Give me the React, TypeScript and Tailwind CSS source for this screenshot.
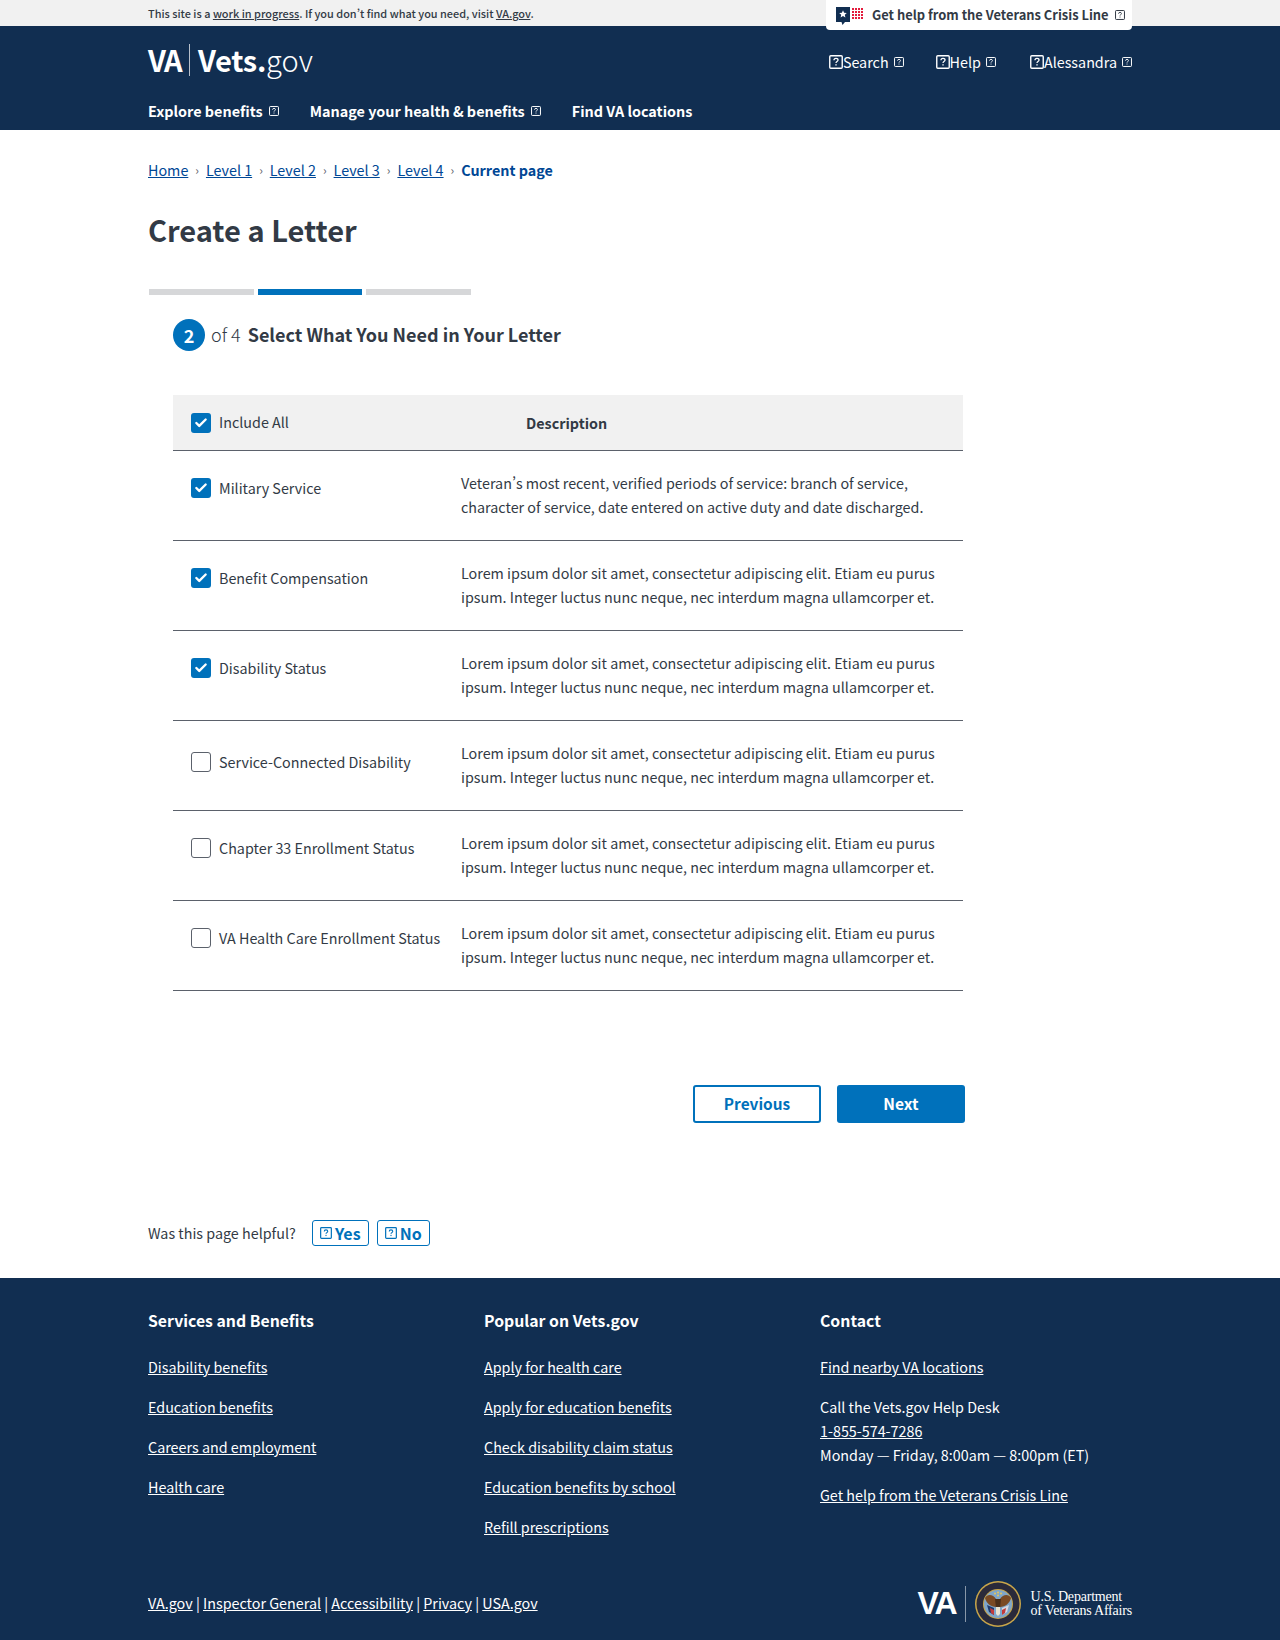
import React from 'react';
import { Check } from 'lucide-react';

const FONT = "font-['Noto_Sans_CJK_SC','Noto_Sans',sans-serif]";

const lorem =
  'Lorem ipsum dolor sit amet, consectetur adipiscing elit. Etiam eu purus ipsum. Integer luctus nunc neque, nec interdum magna ullamcorper et.';

const rows = [
  {
    label: 'Military Service',
    checked: true,
    rowClass: 'pt-[27px]',
    text: 'Veteran’s most recent, verified periods of service: branch of service, character of service, date entered on active duty and date discharged.',
  },
  { label: 'Benefit Compensation', checked: true, rowClass: 'pt-[27px]', text: lorem },
  { label: 'Disability Status', checked: true, rowClass: 'pt-[27px]', text: lorem },
  { label: 'Service-Connected Disability', checked: false, rowClass: 'pt-[31px]', text: lorem },
  { label: 'Chapter 33 Enrollment Status', checked: false, rowClass: 'pt-[27px]', text: lorem },
  { label: 'VA Health Care Enrollment Status', checked: false, rowClass: 'pt-[27px]', text: lorem },
];

const footerCols = [
  {
    title: 'Services and Benefits',
    links: ['Disability benefits', 'Education benefits', 'Careers and employment', 'Health care'],
  },
  {
    title: 'Popular on Vets.gov',
    links: [
      'Apply for health care',
      'Apply for education benefits',
      'Check disability claim status',
      'Education benefits by school',
      'Refill prescriptions',
    ],
  },
];

// missing-glyph box that the icon font leaves behind in the original
const Tofu: React.FC<{ size?: number; className?: string }> = ({ size = 11, className = '' }) => (
  <svg width={size} height={size} viewBox="0 0 11 11" className={`shrink-0 ${className}`} fill="none">
    <rect x="0.6" y="0.6" width="9.8" height="9.8" rx="0.8" stroke="currentColor" strokeWidth="1.1" />
    <path d="M3.9 4.1c0-1 .7-1.5 1.6-1.5s1.6.5 1.6 1.3c0 1.2-1.6 1.2-1.6 2.3" stroke="currentColor" strokeWidth="1" />
    <rect x="5" y="7.2" width="1" height="1.1" fill="currentColor" />
  </svg>
);

const CheckBox: React.FC<{ checked: boolean }> = ({ checked }) =>
  checked ? (
    <span className="flex h-5 w-5 shrink-0 items-center justify-center rounded-[3px] bg-[#0071bb]">
      <Check size={14} strokeWidth={4} className="text-white" />
    </span>
  ) : (
    <span className="h-5 w-5 shrink-0 rounded-[3px] border border-[#5b616b] bg-white" />
  );

const CrisisIcon = () => (
  <svg width="28" height="20" viewBox="0 0 28 20" className="mt-[3px] shrink-0">
    <path d="M0 0h14v15H9l-2.5 3-1-3H0z" fill="#112e51" />
    <path d="M7 3.2l1.1 2.5 2.7.2-2 1.8.6 2.7L7 9l-2.4 1.4.6-2.7-2-1.8 2.7-.2z" fill="#fff" />
    <g fill="#e31c3d">
      {[1, 4, 7, 10].map(y =>
        [16, 19, 22, 25].map(x => <rect key={`${x}-${y}`} x={x} y={y} width="2" height="2" />)
      )}
    </g>
  </svg>
);

const Seal = () => (
  <svg width="46" height="46" viewBox="0 0 46 46" className="shrink-0">
    <circle cx="23" cy="23" r="23" fill="#c9a64a" />
    <circle cx="23" cy="23" r="21.5" fill="#2a2a3a" />
    <circle cx="23" cy="23" r="15" fill="#c9a64a" />
    <circle cx="23" cy="23" r="14" fill="#7fa6c9" />
    <path d="M21 18C18 13 12 13 10 17c1 5 6 9 11 9z" fill="#7a4a24" />
    <path d="M25 18c3-5 9-5 11-1-1 5-6 9-11 9z" fill="#7a4a24" />
    <path d="M20 18h6l-1 9h-4z" fill="#4a2f1a" />
    <path d="M21 26h4v7l-2 2-2-2z" fill="#e8e2d0" />
    <path d="M12 24l7 3v7l-5-3z" fill="#1d3a6e" />
    <path d="M15 27l4 2v5l-3-2z" fill="#c23a3a" />
    <path d="M34 24l-7 3v7l5-3z" fill="#d8d8e0" />
    <path d="M31 27l-4 2v5l3-2z" fill="#c23a3a" />
    <g fill="#e8c75a">
      <circle cx="20" cy="12.5" r="1" />
      <circle cx="23" cy="11.5" r="1" />
      <circle cx="26" cy="12.5" r="1" />
      <circle cx="23" cy="14.5" r="1" />
    </g>
  </svg>
);

export default function App() {
  return (
    <div className={`${FONT} w-[1280px] bg-white text-[14.33px] leading-6 text-[#323a45] [font-feature-settings:'pwid']`}>
      {/* Top notice */}
      <div className="h-[26px] bg-[#f1f1f1]">
        <div className="mx-[148px] flex items-start justify-between">
          <p className="text-[10.9px] leading-[26px] font-medium">
            This site is a <a className="underline">work in progress</a>. If you don’t find what you need, visit{' '}
            <a className="underline">VA.gov</a>.
          </p>
          <a className="relative z-10 flex h-[30px] w-[306px] items-center rounded-b-[4px] bg-white pl-[10px] text-[12.9px] font-bold whitespace-nowrap">
            <CrisisIcon />
            <span className="ml-[8px]">Get help from the Veterans Crisis Line</span>
            <Tofu size={10} className="ml-[6px]" />
          </a>
        </div>
      </div>

      {/* Header */}
      <header className="h-[104px] bg-[#112e51] text-white">
        <div className="mx-[148px] flex h-[64px] items-center justify-between pt-[3px]">
          <div className="flex items-center text-[29px] leading-none">
            <span className="font-bold tracking-[-1.5px]">VA</span>
            <span className="mx-[8px] h-[32px] w-px bg-white/70" />
            <span className="font-bold tracking-[-0.3px]">Vets.</span>
            <span className="font-light">gov</span>
          </div>
          <nav className="flex items-center pt-[5px]">
            {[
              { label: 'Search', className: 'mr-[32px]' },
              { label: 'Help', className: 'mr-[34px]' },
              { label: 'Alessandra', className: '' },
            ].map(item => (
              <a key={item.label} className={`flex items-center ${item.className}`}>
                <Tofu size={14} />
                <span>{item.label}</span>
                <Tofu size={10} className="ml-[5px]" />
              </a>
            ))}
          </nav>
        </div>
        <nav className="mx-[148px] flex h-[40px] items-center pt-[1px] text-[14.4px] font-bold">
          <a className="flex items-center">
            Explore benefits
            <Tofu size={10} className="ml-[6px]" />
          </a>
          <a className="ml-[31px] flex items-center">
            Manage your health &amp; benefits
            <Tofu size={10} className="ml-[6px]" />
          </a>
          <a className="ml-[31px]">Find VA locations</a>
        </nav>
      </header>

      <main className="px-[148px]">
        <nav className="mt-[28px] flex h-[24px] items-center text-[#004795]">
          {['Home', 'Level 1', 'Level 2', 'Level 3', 'Level 4'].map(item => (
            <React.Fragment key={item}>
              <a className="underline">{item}</a>
              <span className="mx-[7px] text-[12px] text-[#5b616b]">›</span>
            </React.Fragment>
          ))}
          <span className="font-bold">Current page</span>
        </nav>

        <h1 className="mt-[23px] text-[29px] leading-[48px] font-bold">Create a Letter</h1>

        <div className="mt-[36px] ml-px flex gap-[4px]">
          <div className="h-[6px] w-[104.7px] bg-[#d6d7d9]" />
          <div className="h-[6px] w-[104.7px] bg-[#0071bb]" />
          <div className="h-[6px] w-[104.7px] bg-[#d6d7d9]" />
        </div>

        <div className="mt-[24px] ml-[25px] flex h-[32px] items-center">
          <span className="flex h-8 w-8 items-center justify-center rounded-full bg-[#0071bb] text-[18px] leading-[30px] font-bold text-white">
            2
          </span>
          <span className="ml-[6px] -mt-[3px] text-[18px] font-light">of 4</span>
          <h2 className="ml-[7px] -mt-[3px] text-[18px] font-bold">Select What You Need in Your Letter</h2>
        </div>

        {/* Letter options */}
        <div className="mt-[44px] ml-[25px] w-[790px]">
          <div className="flex h-[56px] items-center border-b border-[#5b616b] bg-[#f1f1f1] pl-[18px]">
            <CheckBox checked />
            <span className="ml-[8px] -mt-[1px] w-[307px]">Include All</span>
            <span className="font-bold">Description</span>
          </div>
          {rows.map(row => (
            <div key={row.label} className="flex h-[90px] border-b border-[#5b616b]">
              <div className={`flex w-[288px] shrink-0 items-start pl-[18px] ${row.rowClass}`}>
                <CheckBox checked={row.checked} />
                <span className="ml-[8px] -mt-[2px] whitespace-nowrap">{row.label}</span>
              </div>
              <p className="w-[480px] pt-[20px]">{row.text}</p>
            </div>
          ))}
        </div>

        <div className="mt-[94px] ml-[545px] flex gap-[16px]">
          <button className="h-[38px] w-[128px] rounded-[3px] border-2 border-[#0071bb] bg-white pb-[2px] text-[15.4px] font-bold text-[#0071bb]">
            Previous
          </button>
          <button className="h-[38px] w-[128px] rounded-[3px] bg-[#0071bb] pb-[2px] text-[15.6px] font-bold text-white">
            Next
          </button>
        </div>

        <div className="mt-[97px] flex h-[26px] items-center">
          <span>Was this page helpful?</span>
          <button className="ml-[16px] flex h-[26px] w-[57px] items-center justify-center rounded-[3px] border border-[#0071bb] text-[16px] font-bold text-[#0071bb]">
            <Tofu size={12} className="mr-[3px]" />
            Yes
          </button>
          <button className="ml-[8px] flex h-[26px] w-[53px] items-center justify-center rounded-[3px] border border-[#0071bb] text-[16px] font-bold text-[#0071bb]">
            <Tofu size={12} className="mr-[3px]" />
            No
          </button>
        </div>
      </main>

      {/* Footer */}
      <footer className="mt-[32px] h-[362px] bg-[#112e51] px-[148px] pt-[31px] text-white">
        <div className="flex">
          {footerCols.map(col => (
            <div key={col.title} className="w-[336px]">
              <h3 className="text-[15.8px] leading-6 font-bold">{col.title}</h3>
              <ul className="mt-[22px] flex flex-col gap-[16px]">
                {col.links.map(link => (
                  <li key={link}>
                    <a className="underline">{link}</a>
                  </li>
                ))}
              </ul>
            </div>
          ))}
          <div>
            <h3 className="text-[15.8px] leading-6 font-bold">Contact</h3>
            <a className="mt-[22px] block underline">Find nearby VA locations</a>
            <p className="mt-[16px]">
              Call the Vets.gov Help Desk
              <br />
              <a className="underline">1-855-574-7286</a>
              <br />
              Monday — Friday, 8:00am — 8:00pm (ET)
            </p>
            <a className="mt-[16px] block underline">Get help from the Veterans Crisis Line</a>
          </div>
        </div>

        <div className="mt-[42px] flex items-center justify-between">
          <p className="-mt-[2px]">
            <a className="underline">VA.gov</a> | <a className="underline">Inspector General</a> |{' '}
            <a className="underline">Accessibility</a> | <a className="underline">Privacy</a> |{' '}
            <a className="underline">USA.gov</a>
          </p>
          <div className="flex items-center">
            <span className="-mt-[3px] font-['Liberation_Sans',sans-serif] text-[32px] leading-none font-bold tracking-[-2px]">VA</span>
            <span className="mx-[9px] h-[36px] w-px bg-white/50" />
            <Seal />
            <span className="ml-[10px] font-['Liberation_Serif',serif] text-[14px] leading-[14px] tracking-[-0.2px]">
              U.S. Department
              <br />
              of Veterans Affairs
            </span>
          </div>
        </div>
      </footer>
    </div>
  );
}
